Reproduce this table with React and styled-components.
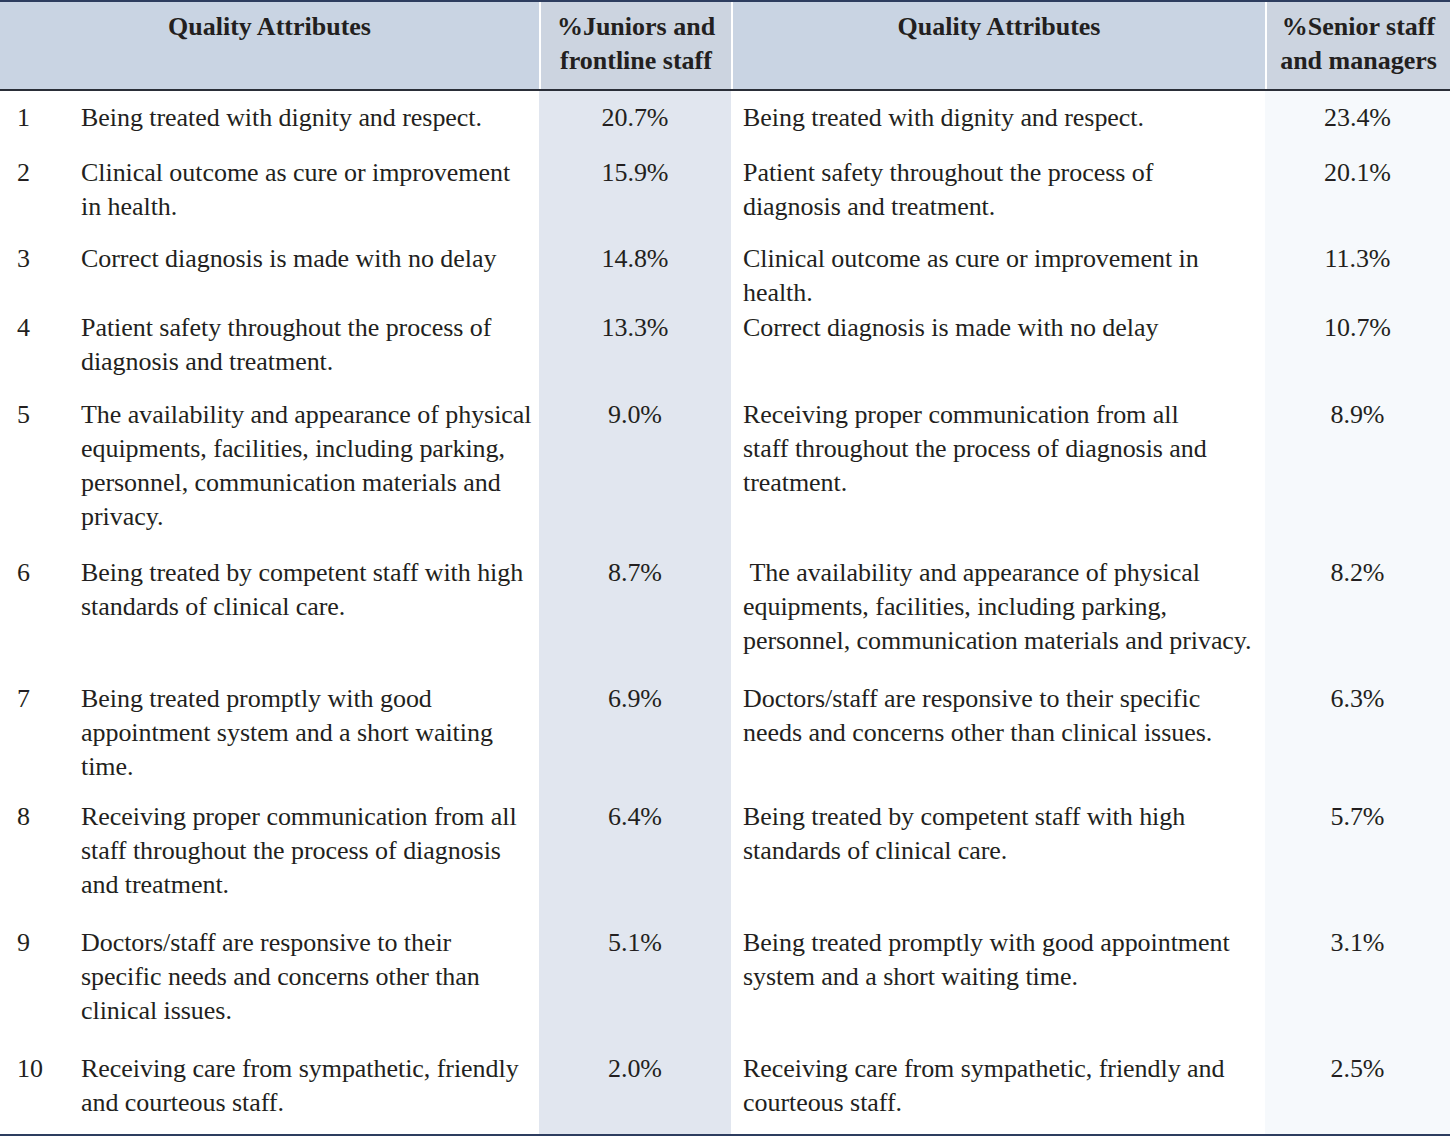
import React from "react";
import styled, { createGlobalStyle } from "styled-components";

const Global = createGlobalStyle`
  html, body { margin: 0; padding: 0; background: #ffffff; }
  body { font-family: "Liberation Serif", "Times New Roman", serif; color: #231f20; }
`;

const COLS = "64px 475px 192px 534px 185px";

const Table = styled.div`
  width: 1450px;
  border-top: 2px solid #2d3d5f;
  border-bottom: 2px solid #2d3d5f;
`;

const HeaderRow = styled.div`
  display: grid;
  grid-template-columns: ${COLS};
  height: 87px;
  background: #c9d4e3;
  border-bottom: 2px solid #2a2e38;
`;

const HeadCell = styled.div`
  grid-column: span ${(p) => p.$span || 1};
  padding-top: 8px;
  text-align: center;
  font-weight: bold;
  font-size: 26px;
  line-height: 34px;
  white-space: nowrap;
  border-left: ${(p) => (p.$sep ? "2px solid #ffffff" : "none")};
  background: ${(p) => p.$bg || "transparent"};
`;

const Row = styled.div`
  display: grid;
  grid-template-columns: ${COLS};
  height: ${(p) => p.$h}px;
`;

const Cell = styled.div`
  padding-top: 10px;
  font-size: 26px;
  line-height: 34px;
  white-space: nowrap;
  padding-left: ${(p) => p.$pl || 0}px;
  text-align: ${(p) => (p.$center ? "center" : "left")};
  background: ${(p) => p.$bg || "transparent"};
  letter-spacing: -0.05px;
`;

const Line = styled.div``;

const rows = [
  { n: "1", h: 55, a: ["Being treated with dignity and respect."], p1: "20.7%", b: ["Being treated with dignity and respect."], p2: "23.4%" },
  { n: "2", h: 86, a: ["Clinical outcome as cure or improvement", "in health."], p1: "15.9%", b: ["Patient safety throughout the process of", "diagnosis and treatment."], p2: "20.1%" },
  { n: "3", h: 69, a: ["Correct diagnosis is made with no delay"], p1: "14.8%", b: ["Clinical outcome as cure or improvement in", "health."], p2: "11.3%" },
  { n: "4", h: 87, a: ["Patient safety throughout the process of", "diagnosis and treatment."], p1: "13.3%", b: ["Correct diagnosis is made with no delay"], p2: "10.7%" },
  { n: "5", h: 158, a: ["The availability and appearance of physical", "equipments, facilities, including parking,", "personnel, communication materials and", "privacy."], p1: "9.0%", b: ["Receiving proper communication from all", "staff throughout the process of diagnosis and", "treatment."], p2: "8.9%" },
  { n: "6", h: 126, a: ["Being treated by competent staff with high", "standards of clinical care."], p1: "8.7%", b: ["\u00a0The availability and appearance of physical", "equipments, facilities, including parking,", "personnel, communication materials and privacy."], p2: "8.2%" },
  { n: "7", h: 118, a: ["Being treated promptly with good", "appointment system and a short waiting", "time."], p1: "6.9%", b: ["Doctors/staff are responsive to their specific", "needs and concerns other than clinical issues."], p2: "6.3%" },
  { n: "8", h: 126, a: ["Receiving proper communication from all", "staff throughout the process of diagnosis", "and treatment."], p1: "6.4%", b: ["Being treated by competent staff with high", "standards of clinical care."], p2: "5.7%" },
  { n: "9", h: 126, a: ["Doctors/staff are responsive to their", "specific needs and concerns other than", "clinical issues."], p1: "5.1%", b: ["Being treated promptly with good appointment", "system and a short waiting time."], p2: "3.1%" },
  { n: "10", h: 92, a: ["Receiving care from sympathetic, friendly", "and courteous staff."], p1: "2.0%", b: ["Receiving care from sympathetic, friendly and", "courteous staff."], p2: "2.5%" },
];

const Lines = ({ items }) => items.map((t, i) => <Line key={i}>{t}</Line>);

export default function App() {
  return (
    <>
      <Global />
      <Table>
        <HeaderRow>
          <HeadCell $span={2}>Quality Attributes</HeadCell>
          <HeadCell $sep $bg="#ccd4e0">%Juniors and<br />frontline staff</HeadCell>
          <HeadCell $sep>Quality Attributes</HeadCell>
          <HeadCell $sep $bg="#ccd4e0">%Senior staff<br />and managers</HeadCell>
        </HeaderRow>
        {rows.map((r) => (
          <Row key={r.n} $h={r.h}>
            <Cell $pl={17}>{r.n}</Cell>
            <Cell $pl={17}><Lines items={r.a} /></Cell>
            <Cell $center $bg="#e1e6ef">{r.p1}</Cell>
            <Cell $pl={12}><Lines items={r.b} /></Cell>
            <Cell $center $bg="#f6f9fc">{r.p2}</Cell>
          </Row>
        ))}
      </Table>
    </>
  );
}
